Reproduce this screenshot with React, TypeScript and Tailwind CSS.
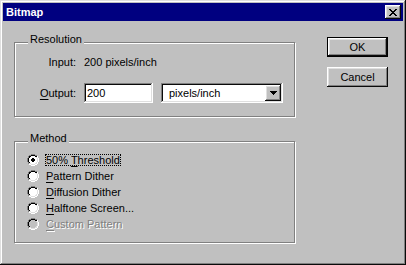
import React from "react";

const RADIO_MAP = [
  "....GGGG....",
  "..GGKKKKGG..",
  ".GKKwwwwKKW.",
  ".GKwwwwwwLW.",
  "GKwwwwwwwwLW",
  "GKwwwwwwwwLW",
  "GKwwwwwwwwLW",
  "GKwwwwwwwwLW",
  ".GKwwwwwwLW.",
  ".GLLwwwwLLW.",
  "..WWLLLLWW..",
  "....WWWW....",
];

const DOT = [".KK.", "KKKK", "KKKK", ".KK."];

const CLOSE_X = [
  "KK....KK",
  ".KK..KK.",
  "..KKKK..",
  "...KK...",
  "..KKKK..",
  ".KK..KK.",
  "KK....KK",
];

const ARROW = ["KKKKKKK", ".KKKKK.", "..KKK..", "...K..."];

function pixels(map: string[], colors: Record<string, string>, ox = 0, oy = 0) {
  const out: React.ReactElement[] = [];
  map.forEach((row, y) => {
    row.split("").forEach((c, x) => {
      const fill = colors[c];
      if (fill) out.push(<rect key={`${ox}-${oy}-${x}-${y}`} x={x + ox} y={y + oy} width={1} height={1} fill={fill} />);
    });
  });
  return out;
}

function Radio({ checked = false, disabled = false }: { checked?: boolean; disabled?: boolean }) {
  const colors: Record<string, string> = {
    G: "#808080",
    K: "#000000",
    L: "#dfdfdf",
    W: "#ffffff",
    w: disabled ? "#c0c0c0" : "#ffffff",
  };
  return (
    <svg width="12" height="12" viewBox="0 0 12 12" shapeRendering="crispEdges" className="shrink-0">
      {pixels(RADIO_MAP, colors)}
      {checked && pixels(DOT, { K: disabled ? "#808080" : "#000000" }, 4, 4)}
    </svg>
  );
}

const bevel =
  "shadow-[inset_-1px_-1px_0_#0a0a0a,inset_1px_1px_0_#ffffff,inset_-2px_-2px_0_#808080,inset_2px_2px_0_#dfdfdf]";
const sunken =
  "shadow-[inset_-1px_-1px_0_#ffffff,inset_1px_1px_0_#808080,inset_-2px_-2px_0_#dfdfdf,inset_2px_2px_0_#0a0a0a]";
const etched = "border border-[#808080] shadow-[1px_1px_0_#ffffff,inset_1px_1px_0_#ffffff]";

function RadioRow({
  label,
  checked,
  disabled,
  focused,
}: {
  label: React.ReactNode;
  checked?: boolean;
  disabled?: boolean;
  focused?: boolean;
}) {
  return (
    <div className="h-[16px] flex items-center">
      <Radio checked={checked} disabled={disabled} />
      <span
        className={`ml-[6px] px-[0px] leading-[10px] border ${
          focused ? "border-dotted border-black" : "border-transparent"
        } ${disabled ? "text-[#808080] [text-shadow:1px_1px_0_#ffffff]" : "text-black"}`}
      >
        {label}
      </span>
    </div>
  );
}

const U = ({ children }: { children: React.ReactNode }) => <span className="underline underline-offset-[2px]">{children}</span>;

export default function App() {
  return (
    <div
      className={`w-[406px] h-[265px] bg-[#c0c0c0] p-[3px] flex flex-col font-['Liberation_Sans',Arial,sans-serif] text-[11px] leading-[13px] text-black shadow-[inset_-1px_-1px_0_#0a0a0a,inset_1px_1px_0_#dfdfdf,inset_-2px_-2px_0_#808080,inset_2px_2px_0_#ffffff]`}
    >
      {/* Title bar */}
      <div className="h-[18px] bg-[#000080] flex items-center justify-between pl-[3px] pr-[2px] shrink-0">
        <span className="font-bold text-white leading-[13px]">Bitmap</span>
        <div className={`w-[16px] h-[14px] bg-[#c0c0c0] ${bevel} flex items-center justify-center`}>
          <svg width="8" height="7" viewBox="0 0 8 7" shapeRendering="crispEdges" className="mt-[0px] ml-[-1px]">
            {pixels(CLOSE_X, { K: "#000000" })}
          </svg>
        </div>
      </div>

      {/* Body */}
      <div className="flex">
        {/* Left column */}
        <div className="ml-[11px] mt-[21px] flex flex-col">
          {/* Resolution */}
          <div className={`relative w-[281px] h-[75px] ${etched} pt-[13px]`}>
            <span className="absolute left-[13px] top-[-10px] px-[2px] bg-[#c0c0c0]">Resolution</span>
            <div className="h-[13px] flex items-center">
              <span className="w-[61px] text-right">Input:</span>
              <span className="ml-[8px]">200 pixels/inch</span>
            </div>
            <div className="mt-[14px] h-[20px] flex items-center">
              <span className="w-[61px] text-right">
                <U>O</U>utput:
              </span>
              <div className={`ml-[8px] w-[69px] h-[20px] bg-white ${sunken} flex items-center pl-[3px]`}>
                200
              </div>
              <div className={`ml-[8px] w-[122px] h-[20px] bg-white ${sunken} flex items-center p-[2px]`}>
                <span className="flex-1 pl-[6px]">pixels/inch</span>
                <div className={`w-[16px] h-[16px] bg-[#c0c0c0] ${bevel} flex items-center justify-center`}>
                  <svg width="7" height="4" viewBox="0 0 7 4" shapeRendering="crispEdges">
                    {pixels(ARROW, { K: "#000000" })}
                  </svg>
                </div>
              </div>
            </div>
          </div>

          {/* Method */}
          <div className={`relative mt-[24px] w-[281px] h-[102px] ${etched} pt-[10px] pl-[12px] flex flex-col`}>
            <span className="absolute left-[13px] top-[-10px] px-[2px] bg-[#c0c0c0]">Method</span>
            <RadioRow
              checked
              focused
              label={
                <>
                  50% <U>T</U>hreshold
                </>
              }
            />
            <RadioRow
              label={
                <>
                  <U>P</U>attern Dither
                </>
              }
            />
            <RadioRow
              label={
                <>
                  <U>D</U>iffusion Dither
                </>
              }
            />
            <RadioRow
              label={
                <>
                  <U>H</U>alftone Screen...
                </>
              }
            />
            <RadioRow
              disabled
              label={
                <>
                  <U>C</U>ustom Pattern
                </>
              }
            />
          </div>
        </div>

        {/* Right column: buttons */}
        <div className="ml-[32px] mt-[16px] flex flex-col gap-[10px]">
          <button
            className={`w-[61px] h-[20px] bg-[#c0c0c0] border border-black ${bevel} flex items-center justify-center`}
          >
            OK
          </button>
          <button className={`w-[61px] h-[20px] bg-[#c0c0c0] ${bevel} flex items-center justify-center`}>
            Cancel
          </button>
        </div>
      </div>
    </div>
  );
}
